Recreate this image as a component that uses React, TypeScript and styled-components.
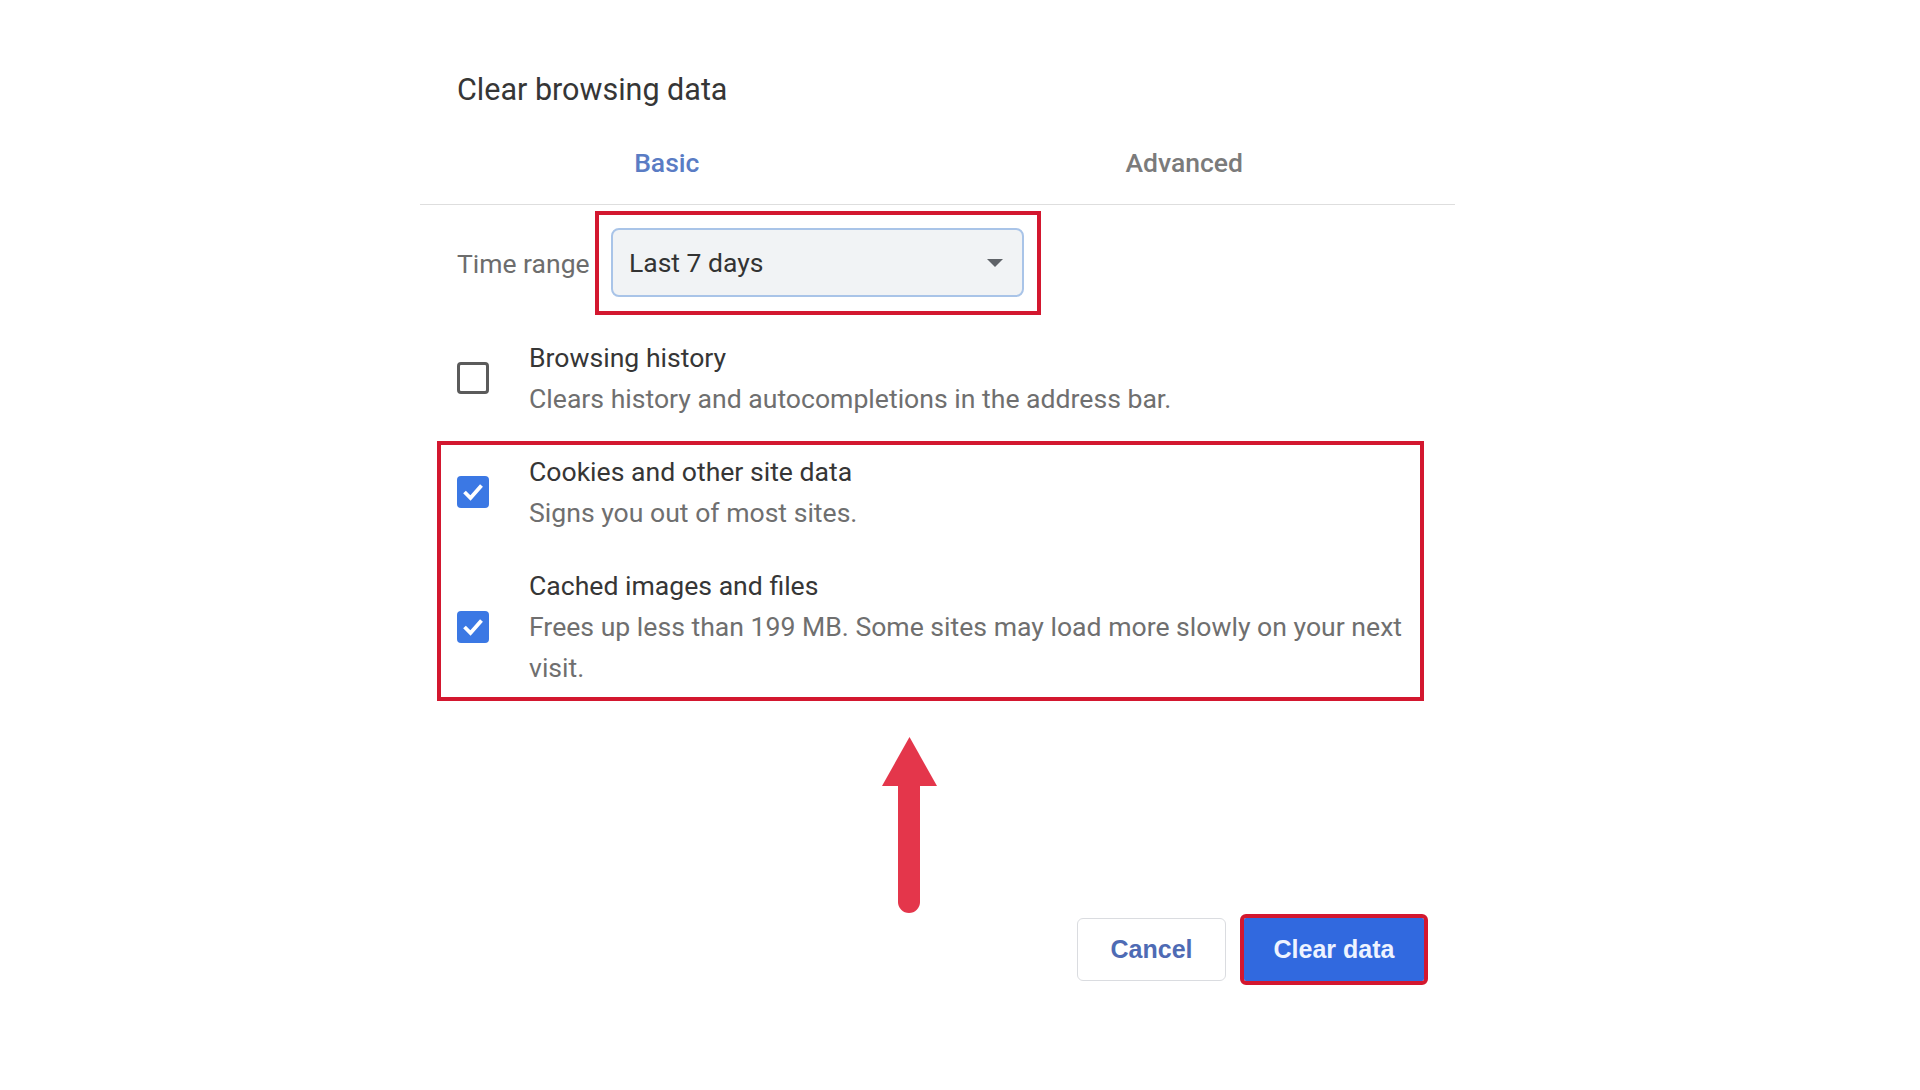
import * as React from 'react';
import styled, { createGlobalStyle } from 'styled-components';

const GlobalStyle = createGlobalStyle`
  body {
    margin: 0;
    background: #ffffff;
    font-family: Roboto, "Liberation Sans", sans-serif;
  }
`

const Page = styled.div`
  padding: 72px 0 60px 420px;
`
const Dialog = styled.div`
  width: 1035px;
`
const Title = styled.h1`
  margin: 0 0 0 37px;
  font-size: 30.5px;
  line-height: 36px;
  font-weight: 400;
  color: #363636;
`
const TabList = styled.div`
  margin-top: 12px;
  height: 84px;
  display: grid;
  grid-template-columns: 1fr 1fr;
  border-bottom: 1px solid #dedede;
`
const Tab = styled.div<{ $active?: boolean }>`
  display: flex;
  align-items: center;
  justify-content: center;
  padding-right: 24px;
  font-size: 26.5px;
  font-weight: 500;
  color: ${p => (p.$active ? '#5a7cc4' : '#7b7b7b')};
`
const Body = styled.div`
  padding: 6px 31px 0 17px;
`
const TimeRow = styled.div`
  display: flex;
  align-items: center;
  padding-left: 20px;
`
const FieldLabel = styled.span`
  width: 138px;
  font-size: 26.5px;
  color: #6d6d6d;
`
const Highlight = styled.div<{ $pad: string }>`
  border: 4px solid #d3172f;
  padding: ${p => p.$pad};
`
const Select = styled.div`
  box-sizing: border-box;
  width: 413px;
  height: 69px;
  border: 2px solid #a9c4e8;
  border-radius: 8px;
  background: #f1f3f5;
  display: flex;
  align-items: center;
  justify-content: space-between;
  padding: 0 19px 0 16px;
  font-size: 26.5px;
  color: #333333;
`
const Caret = styled.span`
  width: 0;
  height: 0;
  border-left: 8px solid transparent;
  border-right: 8px solid transparent;
  border-top: 8px solid #5f6368;
`
const Plain = styled.div`
  margin-top: 22px;
  padding-left: 20px;
`
const OptionRow = styled.div`
  display: flex;
  align-items: center;
  gap: 40px;
`
const OptionText = styled.div`
  flex: 1;
  font-size: 26.6px;
  line-height: 41px;
`
const OptionTitle = styled.div`
  color: #363636;
`
const OptionDesc = styled.div`
  color: #6f6f6f;
`
const Box = styled.span<{ $checked?: boolean }>`
  box-sizing: border-box;
  flex: 0 0 32px;
  width: 32px;
  height: 32px;
  border-radius: 4px;
  display: flex;
  align-items: center;
  justify-content: center;
  background: ${p => (p.$checked ? '#3b78e4' : '#ffffff')};
  border: ${p => (p.$checked ? 'none' : '3px solid #5b5b5b')};
`
const Stack = styled.div`
  display: flex;
  flex-direction: column;
  gap: 32px;
`
const ArrowWrap = styled.div`
  margin: 36px 0 0 445px;
  width: 56px;
  height: 176px;
`
const ButtonRow = styled.div`
  display: flex;
  justify-content: flex-end;
  gap: 18px;
  margin-top: 5px;
`
const Button = styled.button<{ $primary?: boolean }>`
  box-sizing: border-box;
  height: 63px;
  width: ${p => (p.$primary ? '180px' : '149px')};
  font-family: "Liberation Sans", Arial, sans-serif;
  font-weight: 700;
  font-size: 25px;
  border-radius: ${p => (p.$primary ? '2px' : '6px')};
  border: ${p => (p.$primary ? 'none' : '1px solid #dadce0')};
  background: ${p => (p.$primary ? '#3169df' : '#ffffff')};
  color: ${p => (p.$primary ? '#eef3ff' : '#4e6bb4')};
  outline: ${p => (p.$primary ? '4px solid #d3172f' : 'none')};
`

const Checkbox = ({ checked }: { checked?: boolean }) => (
  <Box $checked={checked}>
    {checked && (
      <svg width="32" height="32" viewBox="0 0 32 32">
        <path d="M7.5 16 L13.5 22 L24.5 9.5" fill="none" stroke="#ffffff" strokeWidth="3.8" />
      </svg>
    )}
  </Box>
)

const Option = ({ title, desc, checked }: { title: string; desc: string; checked?: boolean }) => (
  <OptionRow>
    <Checkbox checked={checked} />
    <OptionText>
      <OptionTitle>{title}</OptionTitle>
      <OptionDesc>{desc}</OptionDesc>
    </OptionText>
  </OptionRow>
)

const App = () => {
  return (
    <Page>
      <GlobalStyle />
      <Dialog>
        <Title>Clear browsing data</Title>
        <TabList>
          <Tab $active>Basic</Tab>
          <Tab>Advanced</Tab>
        </TabList>
        <Body>
          <TimeRow>
            <FieldLabel>Time range</FieldLabel>
            <Highlight $pad="13px 13px 14px 12px">
              <Select>
                <span>Last 7 days</span>
                <Caret />
              </Select>
            </Highlight>
          </TimeRow>
          <Plain>
            <Option
              title="Browsing history"
              desc="Clears history and autocompletions in the address bar."
            />
          </Plain>
          <Highlight $pad="6px 16px 9px 16px" style={{ marginTop: 22 }}>
            <Stack>
              <Option checked title="Cookies and other site data" desc="Signs you out of most sites." />
              <Option
                checked
                title="Cached images and files"
                desc="Frees up less than 199 MB. Some sites may load more slowly on your next visit."
              />
            </Stack>
          </Highlight>
          <ArrowWrap>
            <svg width="56" height="176" viewBox="0 0 56 176">
              <polygon points="27.5,0 0,49 55,49" fill="#e4364b" />
              <path d="M16 45 H38 V165 A11 11 0 0 1 16 165 Z" fill="#e4364b" />
            </svg>
          </ArrowWrap>
          <ButtonRow>
            <Button>Cancel</Button>
            <Button $primary>Clear data</Button>
          </ButtonRow>
        </Body>
      </Dialog>
    </Page>
  )
}
export default App
